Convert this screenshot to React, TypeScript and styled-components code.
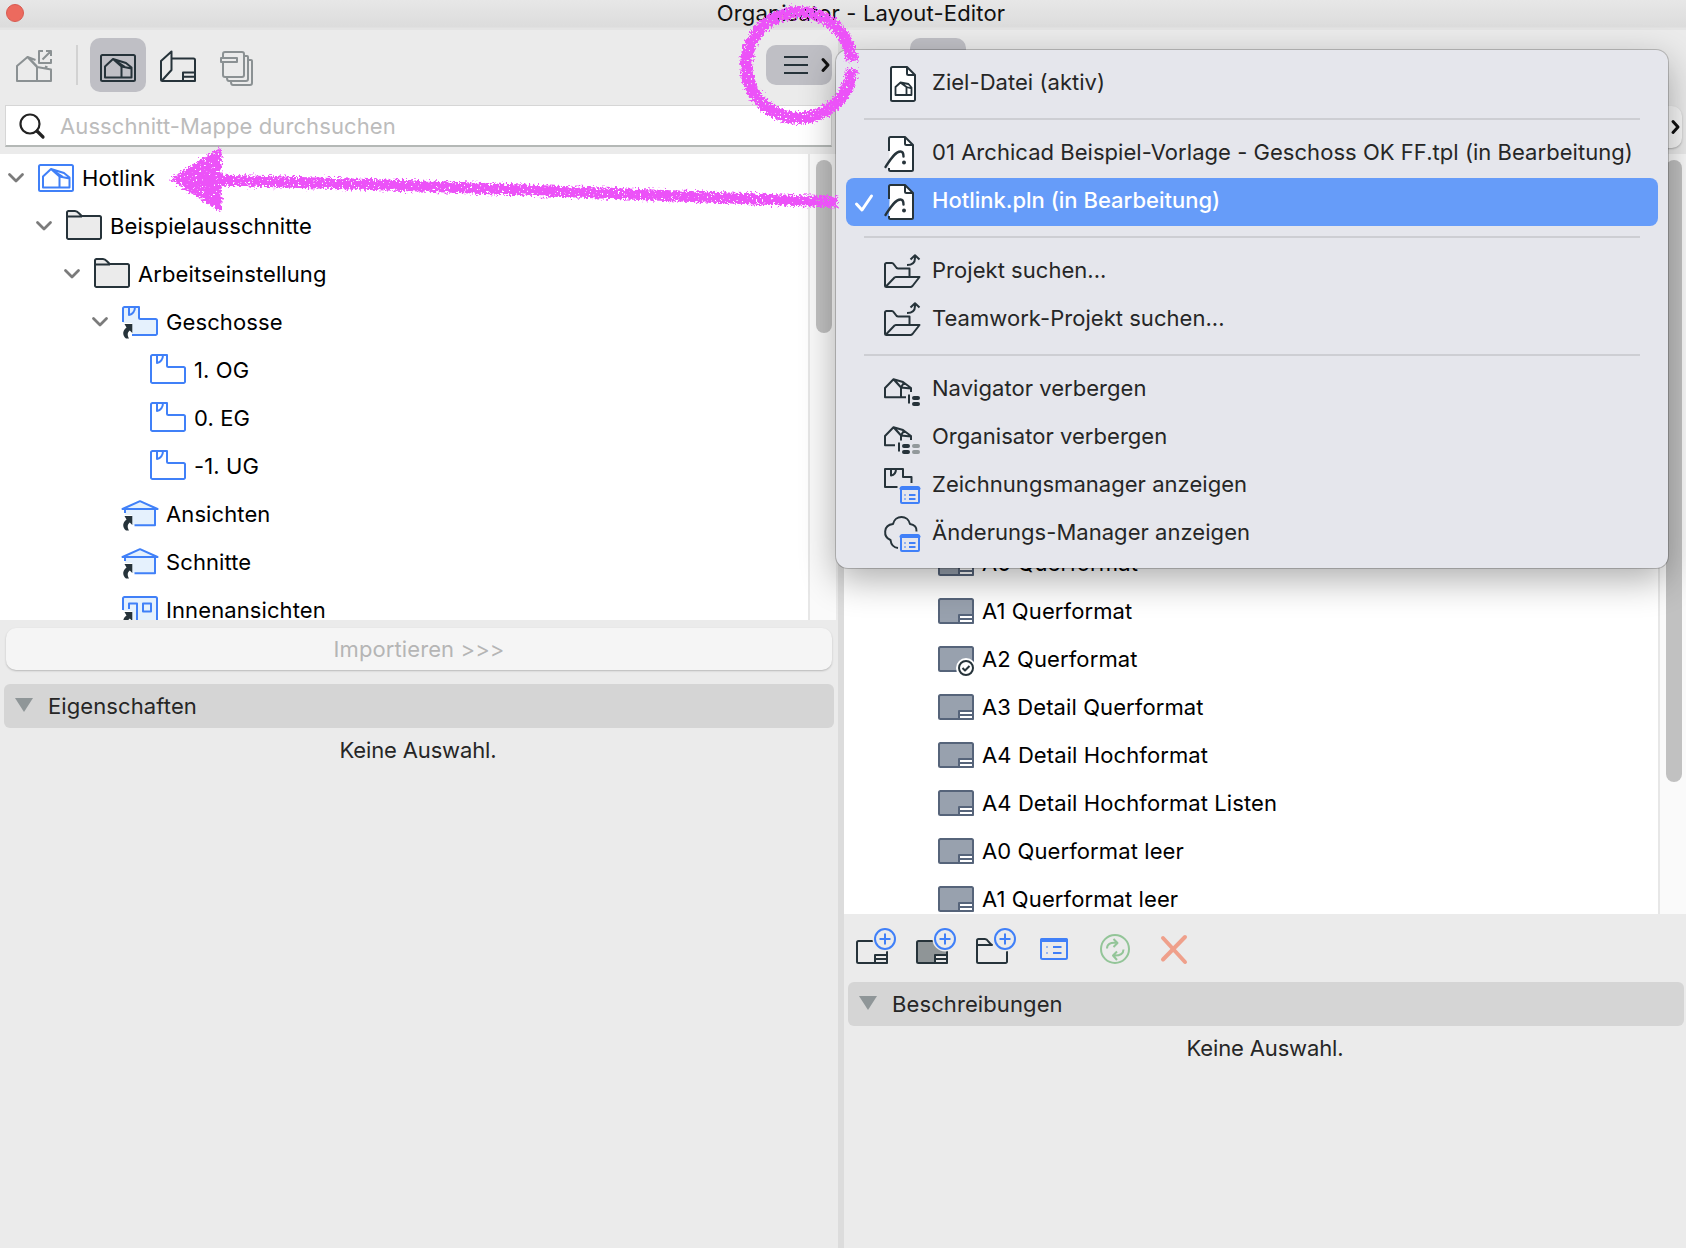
import { ReactNode } from 'react';

import styled, { createGlobalStyle, css } from 'styled-components';

const ink = '#26333a';
const blue = '#4080f8';
const lightBlue = '#e5f1fd';

/* ---------- icons ---------- */

const HouseShape = () => (
  <path d='M5 27.5V16.5L13 9l8.5 7.5v11ZM13 9l13 4 5.5 4.5v10h-10M21.5 16.5l10 2M13 9l12 8' />
);

const FrameHouseIcon = ({ color = blue }: { color?: string }) => (
  <Icon $color={color}>
    <rect x='1' y='5' width='34' height='26' rx='1.5' />
    <HouseShape />
  </Icon>
);

const HouseExportIcon = () => (
  <Icon $color='#8b9193'>
    <path d='M1 34V19l10.500-9L21 20v14ZM21 34h14V22.500L21 20M11.500 10l8 3M12 10l9 9.500M29 19.500l2.500 1' />
    <path d='M27 4h-4v12h12v-4M30 4h5v5M35 4l-8.500 8.500' />
  </Icon>
);

const LayoutBookIcon = () => (
  <Icon $color={ink}>
    <path d='M11.500 11.500H33.500a1.500 1.500 0 0 1 1.500 1.500V34H2.500A1.500 1.500 0 0 1 1 32.500V14L11.500 4.500V23L2 33.500M23 34v-8.500h12M23 29.800h12' />
  </Icon>
);

const PublisherIcon = () => (
  <Icon $color='#8b9193'>
    <rect x='3' y='5' width='21' height='25' rx='2' />
    <rect x='1' y='11' width='16' height='4' fill='#ebebeb' />
    <path d='M24 9h3q1 0 1 1v22q0 2-2 2H9q-2 0-2-3M28 13h3q1 0 1 1v22q0 2-2 2H13q-2 0-2-3' />
  </Icon>
);

const FolderIcon = () => (
  <Icon $color={ink}>
    <path
      fill='#ebebeb'
      d='M1 9V4.500A1.500 1.500 0 0 1 2.500 3H9c3 0 4 3 7 5h17.500A1.500 1.500 0 0 1 35 9.500v20a1.500 1.500 0 0 1-1.500 1.500h-31A1.500 1.500 0 0 1 1 29.500V8.500H16'
    />
  </Icon>
);

const LinkMark = () => (
  <path
    stroke='none'
    fill={ink}
    d='M2.500 20H10.300V29L7.800 26.500C5.500 28 5 31 7 34.500H4C0 31 .500 26.500 4.500 23.500Z'
  />
);

const StoryIcon = ({ linked }: { linked?: boolean }) => (
  <Icon $color={blue}>
    {linked && <path stroke='none' fill={lightBlue} d='M1 3H17V15H35V31H10V19H1Z' />}
    <path
      d={
        linked
          ? 'M1 18V4.500A1.500 1.500 0 0 1 2.500 3H17v10.500a1.500 1.500 0 0 0 1.500 1.500h15a1.500 1.500 0 0 1 1.500 1.500v13a1.500 1.500 0 0 1-1.500 1.500H10'
          : 'M2.500 3H17v10.500a1.500 1.500 0 0 0 1.500 1.500h15a1.500 1.500 0 0 1 1.500 1.500v13a1.500 1.500 0 0 1-1.500 1.500h-31A1.500 1.500 0 0 1 1 29.500v-25A1.500 1.500 0 0 1 2.500 3Z'
      }
    />
    <path d='M7 3v8c3.500-.5 6-4 6-8' />
    {linked && <LinkMark />}
  </Icon>
);

const ViewIcon = () => (
  <Icon $color={blue}>
    <path stroke='none' fill={lightBlue} d='M1 13 18 5l17 8h-2v16H10V19H3v-6Z' />
    <path d='M3 17v-4M.5 13 18 5.200 35.500 13ZM33 13v16.300H12.500' />
    <LinkMark />
  </Icon>
);

const InteriorIcon = () => (
  <Icon $color={blue}>
    <path stroke='none' fill={lightBlue} d='M1 5H35V36H10V19H1Z' />
    <path d='M1 18V6.500A1.500 1.500 0 0 1 2.500 5h31A1.500 1.500 0 0 1 35 6.500V36M7 17v-5.500h8V36M21 11.500h8v8h-8z' />
    <LinkMark />
  </Icon>
);

const SheetIcon = ({ active }: { active?: boolean }) => (
  <Icon $color='#56647a'>
    <rect x='1' y='6' width='34' height='24' rx='1.500' fill='#98a1ae' />
    {active ? (
      <>
        <circle cx='28' cy='27' r='10' fill='#fff' stroke='none' />
        <circle cx='28' cy='27' r='7' fill='#fff' stroke={ink} />
        <path stroke={ink} d='m24.500 27 2.500 2.500 4.500-4.500' />
      </>
    ) : (
      <>
        <path fill='#fff' d='M21 30v-8h14v8z' />
        <path d='M21 26h14' />
      </>
    )}
  </Icon>
);

const DocPage = () => (
  <path
    fill='#fff'
    d='M8.500 1H23l8 8v24.500a1.500 1.500 0 0 1-1.500 1.500h-21A1.500 1.500 0 0 1 7 33.500v-31A1.500 1.500 0 0 1 8.500 1Z'
  />
);

const TargetFileIcon = () => (
  <Icon $color={ink}>
    <DocPage />
    <path d='M23 1v6.500A1.500 1.500 0 0 0 24.500 9H31' />
    <path strokeWidth='1.800' d='M11.500 29V21l5-4.500 6 4.500v8ZM16.500 16.500l8 1.500 3 3.500V29h-5M22.500 21l5 1.500M17 17l5.500 4' />
  </Icon>
);

const ProjectFileIcon = () => (
  <Icon $color={ink}>
    <path
      stroke='none'
      fill='#fff'
      d='M6 1H21l8 8v24.500a1.500 1.500 0 0 1-1.500 1.500h-21A1.500 1.500 0 0 1 5 33.500Z'
    />
    <path d='M5 15V2.500A1.500 1.500 0 0 1 6.500 1H21l8 8v24.500a1.500 1.500 0 0 1-1.500 1.500h-21A1.500 1.500 0 0 1 5 33.500V32M21 1v6.500A1.500 1.500 0 0 0 22.500 9H29' />
    <path strokeWidth='2.400' d='M1.500 31C6 24 11 15.500 16.500 15.500c2.500 0 3 2 3 5' />
    <circle cx='20' cy='26.500' r='2' fill={ink} stroke='none' />
  </Icon>
);

const OpenFolderIcon = () => (
  <Icon $color={ink}>
    <path d='M1 32V10.500A1.500 1.500 0 0 1 2.500 9H8c2.500 0 3 5.500 6 5.500H25.500V23M1.500 33 10.500 23.500q.8-.5 1.500-.5H35.500L28.500 32q-1 1-2 1H2.500Q1 33 1 31.500' />
    <path d='M23 11c5 0 8-2 8-7V1.500M26.500 5.500 31 1.200l4.500 4.300' />
  </Icon>
);

const NavigatorIcon = () => (
  <Icon $color={ink}>
    <path d='M22 25.300H1V16L9.500 7.300 17 15.500v9.500M9.500 7.300 19 10l8 6v4M17 15.500l10 1M10 7.500l7 8 3-5' />
    <path d='M25 22.500v9' />
    <path strokeWidth='4' d='M30 26h4M30 32h4' />
  </Icon>
);

const OrganizerIcon = () => (
  <Icon $color={ink}>
    <path d='M11 25.300H1V16L9.500 7.300 17 15.500v5M9.500 7.300 19 10l8 6v4M17 15.500l10 1M10 7.500l7 8 3-5M15 22.500v9' />
    <path strokeWidth='4' d='M20 26h4M20 32h4' />
    <path strokeWidth='4' stroke='#92999b' d='M30 26h4M30 32h4' />
  </Icon>
);

const ListCard = () => (
  <g stroke={blue}>
    <rect x='17' y='19' width='18' height='16' rx='1' fill='#e5e6ec' />
    <path d='M17 20.500h18' strokeWidth='3' />
    <path d='M20.500 27h1M25 27h6.500M20.500 31h1M25 31h6.500' />
  </g>
);

const DrawingManagerIcon = () => (
  <Icon $color={ink}>
    <path d='M13.500 19H1V1h18v8h8.500v6M7 1v6.500c3-.5 5-3 5-6.500' />
    <ListCard />
  </Icon>
);

const ChangeManagerIcon = () => (
  <Icon $color={ink}>
    <path d='M14 32c-5-.5-7-4-7.500-8C-1 21-1 9 9 8 11-1.200 24-1.200 26 8c4.500.5 7 3.500 6.500 7.500' />
    <ListCard />
  </Icon>
);

const PlusBadge = () => (
  <g stroke={blue}>
    <circle cx='29' cy='11' r='12.500' fill='#ebebeb' stroke='none' />
    <circle cx='29' cy='11' r='10' />
    <path d='M23.500 11h11M29 5.500v11' />
  </g>
);

const NewSheetIcon = ({ filled }: { filled?: boolean }) => (
  <ToolIcon $color={ink} width='40' height='36'>
    <rect x='1' y='13' width='30' height='22' rx='1.500' fill={filled ? '#8f9597' : 'none'} />
    <path fill='#ebebeb' d='M19 27h12v8H19zM19 31h12' />
    <PlusBadge />
  </ToolIcon>
);

const NewFolderIcon = () => (
  <ToolIcon $color={ink} width='40' height='36'>
    <path d='M1 17h15c-3-1-4-6-7-6H2.500A1.500 1.500 0 0 0 1 12.500v21A1.500 1.500 0 0 0 2.500 35h27a1.500 1.500 0 0 0 1.500-1.500V17' />
    <PlusBadge />
  </ToolIcon>
);

const SettingsIcon = () => (
  <ToolIcon $color={blue} width='28' height='36'>
    <rect x='1' y='11' width='26' height='20' rx='1.500' />
    <path strokeWidth='4' d='M2 12h24' />
    <path d='M6.500 19h1M13 19h8.500M6.500 25h1M13 25h8.500' />
  </ToolIcon>
);

const RefreshIcon = () => (
  <ToolIcon $color='#93c598' width='30' height='36'>
    <circle cx='15' cy='21' r='14' />
    <path d='M7 20.500c0-4 3-6.500 10-5.500M13.500 11l4 4-4 4M23.500 21.500c0 4-3 6.500-10 6M17 32l-4-4.500 4-4' />
  </ToolIcon>
);

const DeleteIcon = () => (
  <ToolIcon $color='#efa08b' width='28' height='36'>
    <path strokeWidth='4' d='M1 10 23 34M23 9 1 31.500' />
  </ToolIcon>
);

const SearchIcon = () => (
  <ToolIcon $color='#222' width='28' height='28'>
    <circle cx='11' cy='12' r='9.500' strokeWidth='2.200' />
    <path strokeWidth='3.200' d='m18 19 6 6' />
  </ToolIcon>
);

const Chevron = () => (
  <ToolIcon $color='#7b7b7b' width='16' height='12'>
    <path strokeWidth='2.800' d='m1.500 2.500 6.500 6.500 6.500-6.500' />
  </ToolIcon>
);

const RightChevron = () => (
  <ToolIcon $color='#111' width='8' height='14'>
    <path strokeWidth='3' strokeLinecap='butt' d='m1 1.500 5 5.500-5 5.500' />
  </ToolIcon>
);

/* ---------- data ---------- */

const viewTree: { label: string; level: number; open?: boolean; icon: ReactNode }[] = [
  { label: 'Hotlink', level: 0, open: true, icon: <FrameHouseIcon /> },
  { label: 'Beispielausschnitte', level: 1, open: true, icon: <FolderIcon /> },
  { label: 'Arbeitseinstellung', level: 2, open: true, icon: <FolderIcon /> },
  { label: 'Geschosse', level: 3, open: true, icon: <StoryIcon linked /> },
  { label: '1. OG', level: 4, icon: <StoryIcon /> },
  { label: '0. EG', level: 4, icon: <StoryIcon /> },
  { label: '-1. UG', level: 4, icon: <StoryIcon /> },
  { label: 'Ansichten', level: 3, icon: <ViewIcon /> },
  { label: 'Schnitte', level: 3, icon: <ViewIcon /> },
  { label: 'Innenansichten', level: 3, icon: <InteriorIcon /> },
];

const masterLayouts = [
  { label: 'A0 Querformat' },
  { label: 'A1 Querformat' },
  { label: 'A2 Querformat', active: true },
  { label: 'A3 Detail Querformat' },
  { label: 'A4 Detail Hochformat' },
  { label: 'A4 Detail Hochformat Listen' },
  { label: 'A0 Querformat leer' },
  { label: 'A1 Querformat leer' },
];

const menuGroups: { label: string; checked?: boolean; icon: ReactNode }[][] = [
  [{ label: 'Ziel-Datei (aktiv)', icon: <TargetFileIcon /> }],
  [
    {
      label: '01 Archicad Beispiel-Vorlage - Geschoss OK FF.tpl (in Bearbeitung)',
      icon: <ProjectFileIcon />,
    },
    { label: 'Hotlink.pln (in Bearbeitung)', checked: true, icon: <ProjectFileIcon /> },
  ],
  [
    { label: 'Projekt suchen...', icon: <OpenFolderIcon /> },
    { label: 'Teamwork-Projekt suchen...', icon: <OpenFolderIcon /> },
  ],
  [
    { label: 'Navigator verbergen', icon: <NavigatorIcon /> },
    { label: 'Organisator verbergen', icon: <OrganizerIcon /> },
    { label: 'Zeichnungsmanager anzeigen', icon: <DrawingManagerIcon /> },
    { label: 'Änderungs-Manager anzeigen', icon: <ChangeManagerIcon /> },
  ],
];

/* ---------- page ---------- */

const Marker = () => (
  <MarkerSvg width='900' height='240' viewBox='0 0 900 240'>
    <defs>
      <filter
        id='crayon'
        x='0'
        y='0'
        width='900'
        height='240'
        filterUnits='userSpaceOnUse'
        colorInterpolationFilters='sRGB'
      >
        <feTurbulence type='fractalNoise' baseFrequency='0.45' numOctaves='3' seed='4' result='n' />
        <feDisplacementMap
          in='SourceGraphic'
          in2='n'
          scale='9'
          xChannelSelector='R'
          yChannelSelector='G'
          result='rough'
        />
        <feColorMatrix in='n' type='matrix' values='0 0 0 0 0  0 0 0 0 0  0 0 0 0 0  0 0 0 -14 10.4' result='grain' />
        <feComposite in='rough' in2='grain' operator='in' />
      </filter>
    </defs>
    <g filter='url(#crayon)' fill='none' stroke='#ec52f8' strokeLinejoin='round'>
      <path strokeWidth='12' d='M852 61A53 53 0 1 0 852 69' />
      <path strokeWidth='11' d='M215 180 420 186 837 202' />
      <path fill='#ec52f8' strokeWidth='5' d='M174 179 219 151V208Z' />
    </g>
  </MarkerSvg>
);

const App = () => (
  <Window>
    <GlobalStyle />
    <TitleBar>
      <CloseButton />
      Organisator - Layout-Editor
    </TitleBar>
    <Body>
      <LeftPane>
        <Toolbar>
          <ToolButton>
            <HouseExportIcon />
          </ToolButton>
          <ToolDivider />
          <ToolButton $active>
            <Lowered>
              <FrameHouseIcon color={ink} />
            </Lowered>
          </ToolButton>
          <ToolButton>
            <LayoutBookIcon />
          </ToolButton>
          <ToolButton>
            <PublisherIcon />
          </ToolButton>
          <MenuButton>
            <ToolIcon $color={ink} width='24' height='20'>
              <path d='M0 2h24M0 10h24M0 18h24' />
            </ToolIcon>
            <RightChevron />
          </MenuButton>
        </Toolbar>
        <SearchField>
          <SearchIcon />
          Ausschnitt-Mappe durchsuchen
        </SearchField>
        <ListFrame $height={466}>
          <Rows>
            {viewTree.map(({ label, level, open, icon }) => (
              <TreeRow key={label} $level={level}>
                <ChevronSlot>{open && <Chevron />}</ChevronSlot>
                {icon}
                <RowLabel>{label}</RowLabel>
              </TreeRow>
            ))}
          </Rows>
          <Track>
            <Thumb $height={173} />
          </Track>
        </ListFrame>
        <ImportButton>Importieren &gt;&gt;&gt;</ImportButton>
        <SectionHeader>
          <Triangle />
          Eigenschaften
        </SectionHeader>
        <EmptyText>Keine Auswahl.</EmptyText>
      </LeftPane>
      <RightPane>
        <Toolbar $inset={66}>
          <ToolButton $active />
        </Toolbar>
        <SearchRow>
          <SplitButton>
            <RightChevron />
          </SplitButton>
        </SearchRow>
        <ListFrame $height={760}>
          <Rows $end>
            {masterLayouts.map(({ label, active }) => (
              <LayoutRow key={label}>
                <SheetIcon active={active} />
                <RowLabel>{label}</RowLabel>
              </LayoutRow>
            ))}
          </Rows>
          <Track>
            <Thumb $height={622} />
          </Track>
        </ListFrame>
        <ActionBar>
          <NewSheetIcon />
          <NewSheetIcon filled />
          <NewFolderIcon />
          <ActionExtras>
            <SettingsIcon />
            <RefreshIcon />
            <DeleteIcon />
          </ActionExtras>
        </ActionBar>
        <SectionHeader>
          <Triangle />
          Beschreibungen
        </SectionHeader>
        <EmptyText>Keine Auswahl.</EmptyText>
      </RightPane>
    </Body>
    <Menu>
      {menuGroups.map((group, index) => (
        <MenuGroup key={index}>
          {group.map(({ label, checked, icon }) => (
            <MenuItem key={label} $selected={checked}>
              <CheckSlot>
                {checked && (
                  <ToolIcon $color='#fff' width='20' height='20'>
                    <path strokeWidth='3' d='m2.500 11 5.500 6L17.500 3' />
                  </ToolIcon>
                )}
              </CheckSlot>
              {icon}
              <MenuLabel>{label}</MenuLabel>
            </MenuItem>
          ))}
        </MenuGroup>
      ))}
    </Menu>
    <Marker />
  </Window>
);

const GlobalStyle = createGlobalStyle`
  * {
    box-sizing: border-box;
  }

  body {
    margin: 0;
    overflow: hidden;
    background: #ebebeb;
  }
`;

const Window = styled.div`
  position: relative;
  display: flex;
  flex-direction: column;
  width: 1686px;
  height: 1248px;
  overflow: hidden;
  background: #ebebeb;
  font-family: Inter, 'Liberation Sans', sans-serif;
  font-size: 22px;
  line-height: 28px;
  letter-spacing: 0.1px;
  white-space: nowrap;
  color: #262626;
`;

const iconStyle = css<{ $color: string }>`
  flex: none;
  overflow: visible;
  fill: none;
  stroke: ${({ $color }) => $color};
  stroke-width: 2px;
  stroke-linejoin: round;

  [stroke-width] {
    stroke-linecap: round;
  }
`;

const Icon = styled.svg.attrs({ width: 36, height: 36 })<{ $color: string }>`
  ${iconStyle}
`;

const ToolIcon = styled.svg<{ $color: string }>`
  ${iconStyle}
`;

const TitleBar = styled.header`
  position: relative;
  flex: none;
  display: flex;
  align-items: center;
  justify-content: center;
  height: 30px;
  padding: 0 0 5px 36px;
  background: linear-gradient(#e7e7e7, #dcdcdc 27px, #e4e4e4 28px);
  letter-spacing: 0.18px;
  color: #111;
`;

const CloseButton = styled.span`
  position: absolute;
  left: 6px;
  top: 4px;
  width: 18px;
  height: 18px;
  border: 1px solid #d85a50;
  border-radius: 50%;
  background: #ec6a5e;
`;

const Body = styled.main`
  flex: 1;
  display: flex;
  min-height: 0;
`;

const LeftPane = styled.section`
  display: flex;
  flex-direction: column;
  width: 844px;
  padding-right: 2px;
  border-right: 6px solid #dcdcdc;
`;

const RightPane = styled.section`
  flex: 1;
  display: flex;
  flex-direction: column;
`;

const Toolbar = styled.div<{ $inset?: number }>`
  flex: none;
  display: flex;
  align-items: center;
  gap: 4px;
  height: 75px;
  padding: 0 4px 5px ${({ $inset = 6 }) => $inset}px;
`;

const ToolButton = styled.div<{ $active?: boolean }>`
  display: flex;
  align-items: center;
  justify-content: center;
  width: 56px;
  height: 54px;
  border-radius: 10px;
  background: ${({ $active }) => ($active ? '#bfbfc5' : 'transparent')};
`;

const Lowered = styled.div`
  display: flex;
  padding-top: 6px;
`;

const ToolDivider = styled.span`
  width: 2px;
  height: 40px;
  margin: 0 8px 0 10px;
  background: #d2d2d2;
`;

const MenuButton = styled.div`
  display: flex;
  align-items: center;
  gap: 14px;
  width: 66px;
  height: 40px;
  margin-left: auto;
  padding-left: 18px;
  border-radius: 10px;
  background: #bfbfc5;
`;

const SearchField = styled.div`
  display: flex;
  align-items: center;
  gap: 13px;
  height: 42px;
  margin: 0 4px 7px 5px;
  padding-left: 13px;
  border: 1px solid #d6d6d6;
  border-bottom: 2px solid #b4b8b6;
  background: #fff;
  color: #bcbcbc;
`;

const SearchRow = styled.div`
  display: flex;
  justify-content: flex-end;
  height: 49px;
  padding: 1px 4px 6px;
`;

const SplitButton = styled.div`
  display: flex;
  align-items: center;
  justify-content: flex-end;
  width: 120px;
  padding-right: 2px;
  border-radius: 10px;
  background: #f7f7f7;
  box-shadow: 0 1px 2px rgba(0, 0, 0, 0.25);
`;

const ListFrame = styled.div<{ $height: number }>`
  flex: none;
  display: flex;
  height: ${({ $height }) => $height}px;
  overflow: hidden;
  background: #fff;
`;

const Rows = styled.div<{ $end?: boolean }>`
  flex: 1;
  display: flex;
  flex-direction: column;
  justify-content: ${({ $end }) => ($end ? 'flex-end' : 'flex-start')};
  margin-bottom: ${({ $end }) => ($end ? '-9px' : 0)};
  color: #000;
`;

const rowStyle = css`
  flex: none;
  display: flex;
  align-items: center;
  height: 48px;
`;

const TreeRow = styled.div<{ $level: number }>`
  ${rowStyle}
  padding-left: ${({ $level }) => 8 + $level * 28}px;
`;

const LayoutRow = styled.div`
  ${rowStyle}
  padding-left: 94px;
`;

const ChevronSlot = styled.span`
  display: flex;
  width: 30px;
`;

const RowLabel = styled.span`
  padding-left: 8px;
`;

const Track = styled.div`
  width: 28px;
  padding: 6px 6px 0;
  border-left: 2px solid #e7e7e7;
  background: #fafafa;
`;

const Thumb = styled.div<{ $height: number }>`
  width: 16px;
  height: ${({ $height }) => $height}px;
  border-radius: 8px;
  background: #c1c1c1;
`;

const ImportButton = styled.div`
  flex: none;
  display: flex;
  align-items: center;
  justify-content: center;
  height: 42px;
  margin: 8px 4px 14px 6px;
  border-radius: 10px;
  background: #f5f5f5;
  box-shadow: 0 1px 2px rgba(0, 0, 0, 0.22);
  color: #b5b5b5;
`;

const SectionHeader = styled.div`
  flex: none;
  display: flex;
  align-items: center;
  gap: 15px;
  height: 44px;
  margin: 0 2px 0 4px;
  padding-left: 11px;
  border-radius: 6px;
  background: #d5d5d5;
`;

const Triangle = styled.span`
  margin-bottom: 2px;
  border: 9px solid transparent;
  border-top: 14px solid #8f9698;
  border-bottom: 0;
`;

const EmptyText = styled.p`
  margin: 8px 0 0;
  letter-spacing: -0.15px;
  text-align: center;
`;

const ActionBar = styled.div`
  flex: none;
  display: flex;
  gap: 20px;
  height: 68px;
  padding: 14px 12px 0;
`;

const ActionExtras = styled.div`
  display: flex;
  gap: 32px;
  padding-left: 4px;
`;

const Menu = styled.div`
  position: absolute;
  left: 836px;
  top: 50px;
  width: 832px;
  padding: 10px;
  border-radius: 12px;
  background: #e5e6ec;
  box-shadow: 0 0 0 1px rgba(0, 0, 0, 0.2), 0 12px 36px rgba(0, 0, 0, 0.32);
`;

const MenuGroup = styled.div`
  & + &::before {
    content: '';
    display: block;
    height: 2px;
    margin: 10px 18px;
    background: #cdced3;
  }
`;

const MenuItem = styled.div<{ $selected?: boolean }>`
  display: flex;
  align-items: center;
  height: 48px;
  border-radius: 8px;
  background: ${({ $selected }) => ($selected ? '#669cf9' : 'transparent')};
  letter-spacing: ${({ $selected }) => ($selected ? '0' : '0.04px')};
  font-weight: ${({ $selected }) => ($selected ? 500 : 400)};
  color: ${({ $selected }) => ($selected ? '#fff' : 'inherit')};
`;

const CheckSlot = styled.span`
  display: flex;
  width: 38px;
  padding: 2px 0 0 8px;
`;

const MenuLabel = styled.span`
  padding: 0 0 5px 12px;
`;

const MarkerSvg = styled.svg`
  position: absolute;
  left: 0;
  top: 0;
  pointer-events: none;
`;

export default App;
